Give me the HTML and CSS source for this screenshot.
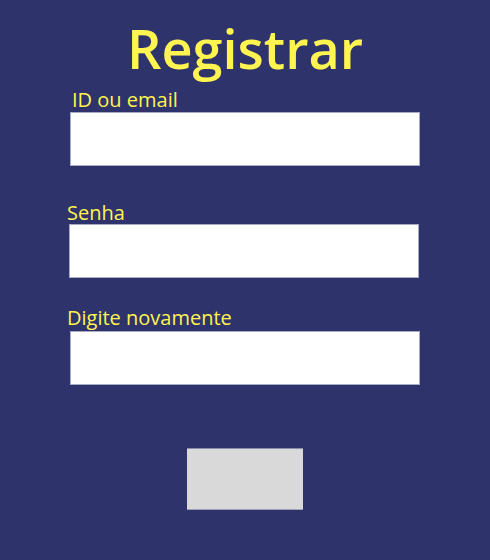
FILE: index.html
```html
<!DOCTYPE html>
<html lang="pt">
<head>
<meta charset="utf-8">
<title>Registrar</title>
<link rel="stylesheet" href="styles.css">
</head>
<body>
  <main class="page">
    <h1 class="title">Registrar</h1>
    <form class="form">
      <div class="field field-id">
        <label class="label" for="id">ID ou email</label>
        <input class="input" id="id" type="text">
      </div>
      <div class="field field-pass">
        <label class="label" for="pass">Senha</label>
        <input class="input" id="pass" type="password">
      </div>
      <div class="field field-again">
        <label class="label" for="again">Digite novamente</label>
        <input class="input" id="again" type="password">
      </div>
      <div class="actions">
        <button class="submit" type="submit"></button>
      </div>
    </form>
  </main>
</body>
</html>
```
FILE: styles.css
```css
html, body {
  margin: 0;
  padding: 0;
  background: #2e336b;
}
.page {
  width: 490px;
  height: 560px;
  display: flex;
  flex-direction: column;
  align-items: center;
}
.title {
  margin: 18px 0 0;
  height: 72px;
  font-family: "Open Sans", sans-serif;
  font-weight: 600;
  font-size: 54px;
  line-height: 60px;
  color: #fff450;
  text-align: center;
}
.form {
  width: 350px;
  display: flex;
  flex-direction: column;
}
.field {
  display: flex;
  flex-direction: column;
  gap: 2px;
}
.label {
  font-family: "Open Sans", sans-serif;
  font-size: 20px;
  line-height: 20px;
  color: #fff450;
}
.input {
  box-sizing: border-box;
  height: 54px;
  width: 350px;
  margin: 0;
  background: #ffffff;
  border: 1px solid #a9acc6;
  outline: none;
}
.field-id .label { padding-left: 2px; }
.field-pass { margin-top: 37px; gap: 1px; }
.field-pass .label { margin-left: -3px; }
.field-pass .input { margin-left: -1px; }
.field-again { margin-top: 30px; gap: 3px; }
.field-again .label { margin-left: -3px; }
.actions {
  display: flex;
  justify-content: center;
  margin-top: 63px;
}
.submit {
  width: 116px;
  height: 62px;
  background: #d9d9d9;
  border: none;
  border-top: 1px solid #8a8eaa;
  border-bottom: 1px solid #9fa2b8;
  padding: 0;
}
```
